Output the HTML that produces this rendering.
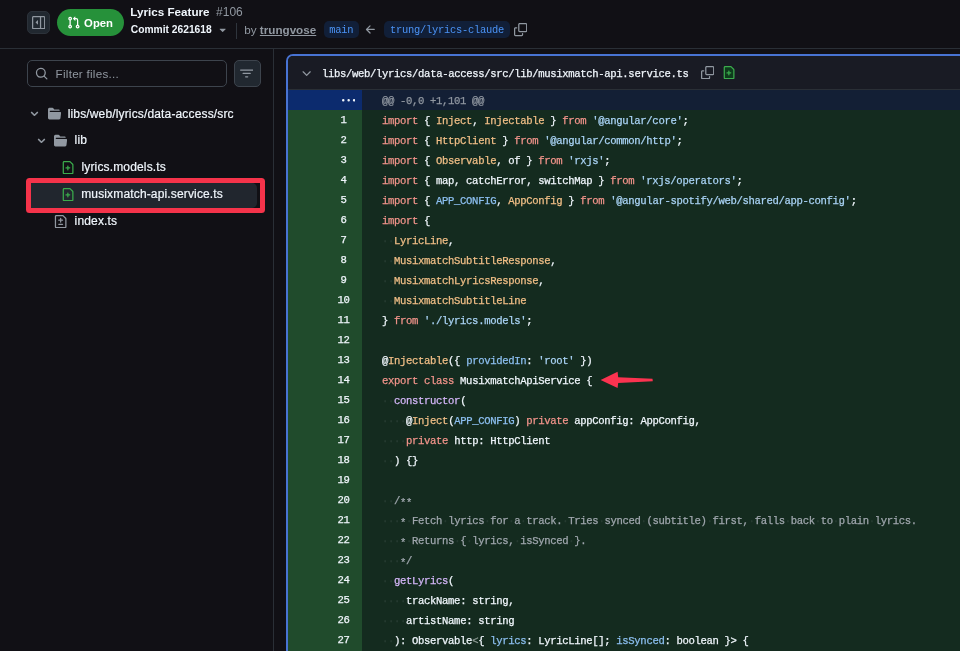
<!DOCTYPE html>
<html>
<head>
<meta charset="utf-8">
<style>
*{box-sizing:border-box;margin:0;padding:0}
html,body{width:960px;height:651px;overflow:hidden;background:#111015;}
body{font-family:"Liberation Sans",sans-serif;color:#f0f6fc;position:relative;font-size:11.67px;}
#root{position:absolute;left:0;top:0;width:960px;height:651px;overflow:hidden;will-change:transform}
.mono{font-family:"Liberation Mono",monospace}
/* header */
#hdr{position:absolute;left:0;top:0;width:960px;height:49px;border-bottom:1px solid #2a2f36;background:#111015}
#tog{position:absolute;left:27px;top:11px;width:22.5px;height:22.5px;border-radius:5px;background:#212830;border:1px solid #2c323a}
#pill{position:absolute;left:56.5px;top:9px;width:67px;height:27px;border-radius:14px;background:#26913a}
#pill span{position:absolute;left:27.6px;top:6.6px;font-weight:bold;font-size:11.3px;color:#fff;line-height:14px}
#title{position:absolute;left:130.3px;top:4.2px;font-size:11.67px;font-weight:bold;line-height:16px;white-space:nowrap;color:#f0f6fc}
#title span{font-weight:normal;color:#9198a1;margin-left:6.5px;font-size:12px}
#commit{position:absolute;left:130.8px;top:23px;font-size:10.25px;font-weight:bold;line-height:14px;white-space:nowrap;color:#f0f6fc}
#vdiv{position:absolute;left:236px;top:23px;width:1px;height:16px;background:#2f353d}
#by{position:absolute;left:244.3px;top:21.5px;font-size:11.67px;line-height:16px;color:#9198a1;white-space:nowrap}
#by u{font-weight:bold;text-decoration:underline;color:#9198a1}
.branch{position:absolute;top:20.8px;height:17.5px;border-radius:5px;background:#111f38;color:#4b93f5;font-family:"Liberation Mono",monospace;font-size:10.4px;letter-spacing:-0.24px;line-height:19px;padding:0 5.7px;white-space:nowrap}
/* sidebar */
#side{position:absolute;left:0;top:49px;width:274px;height:602px;border-right:1px solid #2a2f36}
#filter{position:absolute;left:27px;top:60px;width:200px;height:27px;border:1px solid #3d444d;border-radius:5px;background:#111015}
#filter span{position:absolute;left:27.6px;top:5.7px;font-size:11.67px;line-height:14px;color:#9198a1;letter-spacing:0.25px;white-space:nowrap}
#fbtn{position:absolute;left:233.5px;top:60px;width:27px;height:27px;border:1px solid #3d444d;border-radius:5px;background:#212830}
.trow{-webkit-text-stroke:0.2px}
.trow{position:absolute;left:0;height:27px;line-height:27px;font-size:12px;letter-spacing:0.15px;color:#f0f6fc;white-space:nowrap}
.trow span{position:absolute;top:0}
#sel{position:absolute;left:25.5px;top:178.3px;width:239.6px;height:35.1px;border:5.1px solid #f5334a;border-radius:3.5px;background:#111015}
#sel i{position:absolute;left:0;top:0;width:226.8px;height:24.9px;background:#21262e;border-radius:0 5px 5px 0}
/* diff */
#diff{position:absolute;left:286px;top:54px;width:700px;height:620px;border:2px solid #4873d3;border-radius:7px;background:#142b1f;overflow:hidden}
#fh{position:absolute;left:0;top:0;width:700px;height:34px;background:#191b24;border-bottom:1px solid #2a2f36}
#fh .p{position:absolute;left:34.3px;top:11.4px;font-family:"Liberation Mono",monospace;font-size:10.6px;line-height:14px;color:#f0f6fc;white-space:pre;letter-spacing:-0.35px;will-change:transform}
#hunk{position:absolute;left:0;top:34px;width:700px;height:20px;background:#131f35}
#hunk .g{position:absolute;left:0;top:0;width:74px;height:20px;background:#0c2b6e}
#hunk .t{position:absolute;left:93.7px;top:1.3px;font-family:"Liberation Mono",monospace;font-size:10.6px;line-height:20px;color:#9198a1;white-space:pre;letter-spacing:-0.35px;will-change:transform}
#gut{position:absolute;left:0;top:54px;width:74px;height:600px;background:#204b2c}
#nums{position:absolute;left:37px;top:54.1px;width:37px;will-change:transform}
.ln{width:37px;text-align:center;font-family:"Liberation Mono",monospace;font-size:10.6px;letter-spacing:-0.35px;line-height:20px;color:#f0f6fc;height:20px}
#code{position:absolute;left:94px;top:54.7px;will-change:transform}
.cl{font-family:"Liberation Mono",monospace;font-size:10.6px;line-height:20px;height:20px;color:#f0f6fc;white-space:pre;letter-spacing:-0.35px}
.cl,.ln,#fh .p,#hunk .t{-webkit-text-stroke:0.25px}
.k{color:#f3948b}.e{color:#f0be86}.s{color:#a9d3f5}.c{color:#8cbff0}.f{color:#d3b5f7}.m{color:#a0a7ae}
svg.i{position:absolute;fill:currentColor;display:block}
.w{color:rgba(240,246,252,0.075);font-style:normal}
.o{color:#8d9a94}
.a{font-weight:normal;position:relative;top:1.6px}
</style>
</head>
<body>
<div id="root">
<div id="hdr">
  <div id="tog"></div>
  <div id="pill"><span>Open</span></div>
  <div id="title">Lyrics Feature<span>#106</span></div>
  <div id="commit">Commit 2621618</div>
  <div id="vdiv"></div>
  <div id="by">by <u>trungvose</u></div>
  <div class="branch" style="left:323.5px">main</div>
  <div class="branch" style="left:384.4px">trung/lyrics-claude</div>
</div>
<div id="side"></div>
<div id="filter"><span>Filter files...</span></div>
<div id="fbtn"></div>
<div id="sel"><i></i></div>
<div class="trow" style="top:100.50px"><span style="left:67.7px">libs/web/lyrics/data-access/src</span></div>
<div class="trow" style="top:127.35px"><span style="left:74.6px">lib</span></div>
<div class="trow" style="top:154.20px"><span style="left:81.5px">lyrics.models.ts</span></div>
<div class="trow" style="top:181.05px"><span style="left:81.2px">musixmatch-api.service.ts</span></div>
<div class="trow" style="top:207.90px"><span style="left:74.6px">index.ts</span></div>

<svg class="i" style="left:31.80px;top:15.85px;width:13.33px;height:13.33px;color:#9198a1" viewBox="0 0 16 16"><path d="M4.377 7.823a.25.25 0 0 1 0-.354l2.396-2.396A.25.25 0 0 1 7.2 5.25v4.792a.25.25 0 0 1-.427.177ZM1.75 0h12.5C15.216 0 16 .784 16 1.75v12.5A1.75 1.75 0 0 1 14.25 16H1.75A1.75 1.75 0 0 1 0 14.25V1.75C0 .784.784 0 1.75 0ZM1.5 1.75v12.5c0 .138.112.25.25.25H9.5v-13H1.75a.25.25 0 0 0-.25.25ZM11 14.5h3.25a.25.25 0 0 0 .25-.25V1.75a.25.25 0 0 0-.25-.25H11Z"/></svg>
<svg class="i" style="left:67.00px;top:15.70px;width:13.33px;height:13.33px;color:#fff" viewBox="0 0 16 16"><path d="M1.5 3.25a2.25 2.25 0 1 1 3 2.122v5.256a2.251 2.251 0 1 1-1.5 0V5.372A2.25 2.25 0 0 1 1.5 3.25Zm5.677-.177L9.573.677A.25.25 0 0 1 10 .854V2.5h1A2.5 2.5 0 0 1 13.5 5v5.628a2.251 2.251 0 1 1-1.5 0V5a1 1 0 0 0-1-1h-1v1.646a.25.25 0 0 1-.427.177L7.177 3.427a.25.25 0 0 1 0-.354ZM3.75 2.5a.75.75 0 1 0 0 1.5.75.75 0 0 0 0-1.5Zm0 9.5a.75.75 0 1 0 0 1.5.75.75 0 0 0 0-1.5Zm8.25.75a.75.75 0 1 0 1.5 0 .75.75 0 0 0-1.5 0Z"/></svg>
<svg class="i" style="left:215.70px;top:22.60px;width:13.33px;height:13.33px;color:#9198a1" viewBox="0 0 16 16"><path d="m4.427 7.427 3.396 3.396a.25.25 0 0 0 .354 0l3.396-3.396A.25.25 0 0 0 11.396 7H4.604a.25.25 0 0 0-.177.427Z"/></svg>
<svg class="i" style="left:364.25px;top:23.25px;width:13.33px;height:13.33px;color:#9198a1" viewBox="0 0 16 16"><path d="M7.78 12.53a.75.75 0 0 1-1.06 0L2.47 8.28a.75.75 0 0 1 0-1.06l4.25-4.25a.751.751 0 0 1 1.042.018.751.751 0 0 1 .018 1.042L4.81 7h7.44a.75.75 0 0 1 0 1.5H4.81l2.97 2.97a.75.75 0 0 1 0 1.06Z"/></svg>
<svg class="i" style="left:514.00px;top:23.30px;width:13.33px;height:13.33px;color:#9198a1" viewBox="0 0 16 16"><path d="M0 6.75C0 5.784.784 5 1.75 5h1.5a.75.75 0 0 1 0 1.5h-1.5a.25.25 0 0 0-.25.25v7.5c0 .138.112.25.25.25h7.5a.25.25 0 0 0 .25-.25v-1.5a.75.75 0 0 1 1.5 0v1.5A1.75 1.75 0 0 1 9.25 16h-7.5A1.75 1.75 0 0 1 0 14.25ZM5 1.75C5 .784 5.784 0 6.75 0h7.5C15.216 0 16 .784 16 1.75v7.5A1.75 1.75 0 0 1 14.25 11h-7.5A1.75 1.75 0 0 1 5 9.25Zm1.75-.25a.25.25 0 0 0-.25.25v7.5c0 .138.112.25.25.25h7.5a.25.25 0 0 0 .25-.25v-7.5a.25.25 0 0 0-.25-.25Z"/></svg>
<svg class="i" style="left:35.30px;top:67.10px;width:13.33px;height:13.33px;color:#9198a1" viewBox="0 0 16 16"><path d="M10.68 11.74a6 6 0 0 1-7.922-8.982 6 6 0 0 1 8.982 7.922l3.04 3.04a.749.749 0 0 1-.326 1.275.749.749 0 0 1-.734-.215ZM11.5 7a4.499 4.499 0 1 0-8.997 0A4.499 4.499 0 0 0 11.5 7Z"/></svg>
<svg class="i" style="left:240.00px;top:67.00px;width:13.33px;height:13.33px;color:#9198a1" viewBox="0 0 16 16"><path d="M.75 3h14.5a.75.75 0 0 1 0 1.5H.75a.75.75 0 0 1 0-1.5ZM3 7.75A.75.75 0 0 1 3.75 7h8.5a.75.75 0 0 1 0 1.5h-8.5A.75.75 0 0 1 3 7.75Zm3 4a.75.75 0 0 1 .75-.75h2.5a.75.75 0 0 1 0 1.5h-2.5a.75.75 0 0 1-.75-.75Z"/></svg>
<svg class="i" style="left:29.10px;top:108.10px;width:11.00px;height:11.00px;color:#9198a1" viewBox="0 0 12 12"><path d="M6 8.825c-.2 0-.4-.1-.5-.2l-3.3-3.3c-.3-.3-.3-.8 0-1.1.3-.3.8-.3 1.1 0l2.7 2.7 2.7-2.7c.3-.3.8-.3 1.1 0 .3.3.3.8 0 1.1l-3.2 3.2c-.2.2-.4.3-.6.3Z"/></svg>
<svg class="i" style="left:47.50px;top:107.00px;width:13.33px;height:13.33px;color:#9198a1" viewBox="0 0 16 16"><path d="M.513 1.513A1.75 1.75 0 0 1 1.75 1h3.5c.55 0 1.07.26 1.4.7l.9 1.2a.25.25 0 0 0 .2.1H13a1 1 0 0 1 1 1v.5H2.75a.75.75 0 0 0 0 1.5h11.978a1 1 0 0 1 .994 1.117L15 13.25A1.75 1.75 0 0 1 13.25 15H1.75A1.75 1.75 0 0 1 0 13.25V2.75c0-.464.184-.91.513-1.237Z"/></svg>
<svg class="i" style="left:35.60px;top:135.30px;width:11.00px;height:11.00px;color:#9198a1" viewBox="0 0 12 12"><path d="M6 8.825c-.2 0-.4-.1-.5-.2l-3.3-3.3c-.3-.3-.3-.8 0-1.1.3-.3.8-.3 1.1 0l2.7 2.7 2.7-2.7c.3-.3.8-.3 1.1 0 .3.3.3.8 0 1.1l-3.2 3.2c-.2.2-.4.3-.6.3Z"/></svg>
<svg class="i" style="left:54.00px;top:134.20px;width:13.33px;height:13.33px;color:#9198a1" viewBox="0 0 16 16"><path d="M.513 1.513A1.75 1.75 0 0 1 1.75 1h3.5c.55 0 1.07.26 1.4.7l.9 1.2a.25.25 0 0 0 .2.1H13a1 1 0 0 1 1 1v.5H2.75a.75.75 0 0 0 0 1.5h11.978a1 1 0 0 1 .994 1.117L15 13.25A1.75 1.75 0 0 1 13.25 15H1.75A1.75 1.75 0 0 1 0 13.25V2.75c0-.464.184-.91.513-1.237Z"/></svg>
<svg class="i" style="left:60.80px;top:161.00px;width:13.33px;height:13.33px;color:#3bab4c" viewBox="0 0 16 16"><path d="M2 1.75C2 .784 2.784 0 3.75 0h6.586c.464 0 .909.184 1.237.513l2.914 2.914c.329.328.513.773.513 1.237v9.586A1.75 1.75 0 0 1 13.25 16h-9.5A1.75 1.75 0 0 1 2 14.25Zm1.75-.25a.25.25 0 0 0-.25.25v12.5c0 .138.112.25.25.25h9.5a.25.25 0 0 0 .25-.25V4.664a.25.25 0 0 0-.073-.177l-2.914-2.914a.25.25 0 0 0-.177-.073Zm4.48 3.758a.75.75 0 0 1 .755.745l.01 1.497h1.497a.75.75 0 0 1 0 1.5H9v1.507a.75.75 0 0 1-1.5 0V9.005l-1.502.01a.75.75 0 0 1-.01-1.5l1.507-.01-.01-1.492a.75.75 0 0 1 .745-.755Z"/></svg>
<svg class="i" style="left:60.80px;top:187.90px;width:13.33px;height:13.33px;color:#3bab4c" viewBox="0 0 16 16"><path d="M2 1.75C2 .784 2.784 0 3.75 0h6.586c.464 0 .909.184 1.237.513l2.914 2.914c.329.328.513.773.513 1.237v9.586A1.75 1.75 0 0 1 13.25 16h-9.5A1.75 1.75 0 0 1 2 14.25Zm1.75-.25a.25.25 0 0 0-.25.25v12.5c0 .138.112.25.25.25h9.5a.25.25 0 0 0 .25-.25V4.664a.25.25 0 0 0-.073-.177l-2.914-2.914a.25.25 0 0 0-.177-.073Zm4.48 3.758a.75.75 0 0 1 .755.745l.01 1.497h1.497a.75.75 0 0 1 0 1.5H9v1.507a.75.75 0 0 1-1.5 0V9.005l-1.502.01a.75.75 0 0 1-.01-1.5l1.507-.01-.01-1.492a.75.75 0 0 1 .745-.755Z"/></svg>
<svg class="i" style="left:53.70px;top:214.70px;width:13.33px;height:13.33px;color:#9198a1" viewBox="0 0 16 16"><path d="M1 1.75C1 .784 1.784 0 2.75 0h7.586c.464 0 .909.184 1.237.513l2.914 2.914c.329.328.513.773.513 1.237v9.586A1.75 1.75 0 0 1 13.25 16H2.75A1.75 1.75 0 0 1 1 14.25Zm1.75-.25a.25.25 0 0 0-.25.25v12.5c0 .138.112.25.25.25h10.5a.25.25 0 0 0 .25-.25V4.664a.25.25 0 0 0-.073-.177l-2.914-2.914a.25.25 0 0 0-.177-.073ZM8 3.25a.75.75 0 0 1 .75.75v1.5h1.5a.75.75 0 0 1 0 1.5h-1.5v1.5a.75.75 0 0 1-1.5 0V7h-1.5a.75.75 0 0 1 0-1.5h1.5V4A.75.75 0 0 1 8 3.25Zm-3 8a.75.75 0 0 1 .75-.75h4.5a.75.75 0 0 1 0 1.5h-4.5a.75.75 0 0 1-.75-.75Z"/></svg>
<div id="diff">
  <div id="fh"><div class="p">libs/web/lyrics/data-access/src/lib/musixmatch-api.service.ts</div></div>
  <div id="hunk"><div class="g"></div><div class="t">@@ -0,0 +1,101 @@</div></div>
  <div id="gut"></div>
<svg class="i" style="left:11.80px;top:10.50px;width:13.33px;height:13.33px;color:#9198a1" viewBox="0 0 16 16"><path d="M12.78 5.22a.749.749 0 0 1 0 1.06l-4.25 4.25a.749.749 0 0 1-1.06 0L3.22 6.28a.749.749 0 1 1 1.06-1.06L8 8.939l3.72-3.719a.749.749 0 0 1 1.06 0Z"/></svg>
<svg class="i" style="left:412.70px;top:9.90px;width:13.33px;height:13.33px;color:#9198a1" viewBox="0 0 16 16"><path d="M0 6.75C0 5.784.784 5 1.75 5h1.5a.75.75 0 0 1 0 1.5h-1.5a.25.25 0 0 0-.25.25v7.5c0 .138.112.25.25.25h7.5a.25.25 0 0 0 .25-.25v-1.5a.75.75 0 0 1 1.5 0v1.5A1.75 1.75 0 0 1 9.25 16h-7.5A1.75 1.75 0 0 1 0 14.25ZM5 1.75C5 .784 5.784 0 6.75 0h7.5C15.216 0 16 .784 16 1.75v7.5A1.75 1.75 0 0 1 14.25 11h-7.5A1.75 1.75 0 0 1 5 9.25Zm1.75-.25a.25.25 0 0 0-.25.25v7.5c0 .138.112.25.25.25h7.5a.25.25 0 0 0 .25-.25v-7.5a.25.25 0 0 0-.25-.25Z"/></svg>
<svg class="i" style="left:434.10px;top:9.90px;width:13.33px;height:13.33px;color:#3bab4c" viewBox="0 0 16 16"><path fill="#0e3a1c" d="M3 1h7.5l3.5 3.5V15H3z"/><path d="M2 1.75C2 .784 2.784 0 3.75 0h6.586c.464 0 .909.184 1.237.513l2.914 2.914c.329.328.513.773.513 1.237v9.586A1.75 1.75 0 0 1 13.25 16h-9.5A1.75 1.75 0 0 1 2 14.25Zm1.75-.25a.25.25 0 0 0-.25.25v12.5c0 .138.112.25.25.25h9.5a.25.25 0 0 0 .25-.25V4.664a.25.25 0 0 0-.073-.177l-2.914-2.914a.25.25 0 0 0-.177-.073Zm4.48 3.758a.75.75 0 0 1 .755.745l.01 1.497h1.497a.75.75 0 0 1 0 1.5H9v1.507a.75.75 0 0 1-1.5 0V9.005l-1.502.01a.75.75 0 0 1-.01-1.5l1.507-.01-.01-1.492a.75.75 0 0 1 .745-.755Z"/></svg>
<svg class="i" style="left:53.60px;top:37.95px;width:13.33px;height:13.33px;color:#f0f6fc" viewBox="0 0 16 16"><path d="M8 9a1.5 1.5 0 1 0 0-3 1.5 1.5 0 0 0 0 3ZM1.5 9a1.5 1.5 0 1 0 0-3 1.5 1.5 0 0 0 0 3Zm13 0a1.5 1.5 0 1 0 0-3 1.5 1.5 0 0 0 0 3Z"/></svg>
<div id="nums">
<div class="ln">1</div>
<div class="ln">2</div>
<div class="ln">3</div>
<div class="ln">4</div>
<div class="ln">5</div>
<div class="ln">6</div>
<div class="ln">7</div>
<div class="ln">8</div>
<div class="ln">9</div>
<div class="ln">10</div>
<div class="ln">11</div>
<div class="ln">12</div>
<div class="ln">13</div>
<div class="ln">14</div>
<div class="ln">15</div>
<div class="ln">16</div>
<div class="ln">17</div>
<div class="ln">18</div>
<div class="ln">19</div>
<div class="ln">20</div>
<div class="ln">21</div>
<div class="ln">22</div>
<div class="ln">23</div>
<div class="ln">24</div>
<div class="ln">25</div>
<div class="ln">26</div>
<div class="ln">27</div>
</div>
<div id="code">
<div class="cl"><span class="k">import</span> { <span class="e">Inject</span>, <span class="e">Injectable</span> } <span class="k">from</span> <span class="s">&#x27;@angular/core&#x27;</span>;</div>
<div class="cl"><span class="k">import</span> { <span class="e">HttpClient</span> } <span class="k">from</span> <span class="s">&#x27;@angular/common/http&#x27;</span>;</div>
<div class="cl"><span class="k">import</span> { <span class="e">Observable</span>, of } <span class="k">from</span> <span class="s">&#x27;rxjs&#x27;</span>;</div>
<div class="cl"><span class="k">import</span> { map, catchError, switchMap } <span class="k">from</span> <span class="s">&#x27;rxjs/operators&#x27;</span>;</div>
<div class="cl"><span class="k">import</span> { <span class="c">APP_CONFIG</span>, <span class="e">AppConfig</span> } <span class="k">from</span> <span class="s">&#x27;@angular-spotify/web/shared/app-config&#x27;</span>;</div>
<div class="cl"><span class="k">import</span> {</div>
<div class="cl"><i class="w">·</i><i class="w">·</i><span class="e">LyricLine</span>,</div>
<div class="cl"><i class="w">·</i><i class="w">·</i><span class="e">MusixmatchSubtitleResponse</span>,</div>
<div class="cl"><i class="w">·</i><i class="w">·</i><span class="e">MusixmatchLyricsResponse</span>,</div>
<div class="cl"><i class="w">·</i><i class="w">·</i><span class="e">MusixmatchSubtitleLine</span></div>
<div class="cl">} <span class="k">from</span> <span class="s">&#x27;./lyrics.models&#x27;</span>;</div>
<div class="cl"></div>
<div class="cl">@<span class="e">Injectable</span>({ <span class="c">providedIn</span>: <span class="s">&#x27;root&#x27;</span> })</div>
<div class="cl"><span class="k">export</span> <span class="k">class</span> MusixmatchApiService {</div>
<div class="cl"><i class="w">·</i><i class="w">·</i><span class="f">constructor</span>(</div>
<div class="cl"><i class="w">·</i><i class="w">·</i><i class="w">·</i><i class="w">·</i>@<span class="e">Inject</span>(<span class="c">APP_CONFIG</span>) <span class="k">private</span> appConfig: AppConfig,</div>
<div class="cl"><i class="w">·</i><i class="w">·</i><i class="w">·</i><i class="w">·</i><span class="k">private</span> http: HttpClient</div>
<div class="cl"><i class="w">·</i><i class="w">·</i>) {}</div>
<div class="cl"></div>
<div class="cl"><i class="w">·</i><i class="w">·</i><span class="m">/<b class="a">*</b><b class="a">*</b></span></div>
<div class="cl"><i class="w">·</i><i class="w">·</i><span class="m"><i class="w">·</i><b class="a">*</b><i class="w">·</i>Fetch<i class="w">·</i>lyrics<i class="w">·</i>for<i class="w">·</i>a<i class="w">·</i>track.<i class="w">·</i>Tries<i class="w">·</i>synced<i class="w">·</i>(subtitle)<i class="w">·</i>first,<i class="w">·</i>falls<i class="w">·</i>back<i class="w">·</i>to<i class="w">·</i>plain<i class="w">·</i>lyrics.</span></div>
<div class="cl"><i class="w">·</i><i class="w">·</i><span class="m"><i class="w">·</i><b class="a">*</b><i class="w">·</i>Returns<i class="w">·</i>{<i class="w">·</i>lyrics,<i class="w">·</i>isSynced<i class="w">·</i>}.</span></div>
<div class="cl"><i class="w">·</i><i class="w">·</i><span class="m"><i class="w">·</i><b class="a">*</b>/</span></div>
<div class="cl"><i class="w">·</i><i class="w">·</i><span class="f">getLyrics</span>(</div>
<div class="cl"><i class="w">·</i><i class="w">·</i><i class="w">·</i><i class="w">·</i>trackName: string,</div>
<div class="cl"><i class="w">·</i><i class="w">·</i><i class="w">·</i><i class="w">·</i>artistName: string</div>
<div class="cl"><i class="w">·</i><i class="w">·</i>): Observable<span class="o">&lt;</span>{ <span class="c">lyrics</span>: LyricLine[]; <span class="c">isSynced</span>: boolean }&gt; {</div>
</div>
</div>
<svg id="arrow" style="position:absolute;left:0;top:0;width:960px;height:651px" viewBox="0 0 960 651"><polygon fill="#fb3350" points="600.6,380 617.6,371.8 618.2,377.2 652.5,378.7 652.8,381.2 618.2,382.9 617.6,388"/></svg>
</div>
</body>
</html>
